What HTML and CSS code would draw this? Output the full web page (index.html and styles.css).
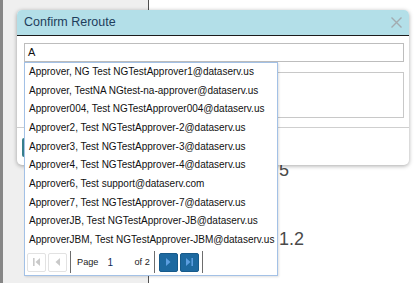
FILE: index.html
```html
<!DOCTYPE html>
<html>
<head>
<meta charset="utf-8">
<link rel="stylesheet" href="styles.css">
</head>
<body>
<div class="page">
  <aside class="sidebar"></aside>
  <main class="main">
    <p class="ver v1">5</p>
    <p class="ver v2">1.2</p>
  </main>
</div>

<div class="modal">
  <div class="modal-head">
    <span class="title">Confirm Reroute</span>
    <svg class="close" width="11" height="11" viewBox="0 0 11 11"><path d="M0.5 0.5L10.5 10.5M10.5 0.5L0.5 10.5" stroke="#a3abb0" stroke-width="1.4" fill="none"/></svg>
  </div>
  <div class="modal-body">
    <div class="field">A</div>
    <div class="area"></div>
  </div>
  <div class="modal-foot">
    <button class="btn" aria-label="Reroute"></button>
  </div>
</div>

<div class="dropdown">
  <ul class="list">
    <li>Approver, NG Test NGTestApprover1@dataserv.us</li>
    <li>Approver, TestNA NGtest-na-approver@dataserv.us</li>
    <li>Approver004, Test NGTestApprover004@dataserv.us</li>
    <li>Approver2, Test NGTestApprover-2@dataserv.us</li>
    <li>Approver3, Test NGTestApprover-3@dataserv.us</li>
    <li>Approver4, Test NGTestApprover-4@dataserv.us</li>
    <li>Approver6, Test support@dataserv.com</li>
    <li>Approver7, Test NGTestApprover-7@dataserv.us</li>
    <li>ApproverJB, Test NGTestApprover-JB@dataserv.us</li>
    <li>ApproverJBM, Test NGTestApprover-JBM@dataserv.us</li>
  </ul>
  <div class="pager">
    <span class="pbtn off"><svg width="10" height="10" viewBox="0 0 10 10"><rect x="1" y="1" width="1.6" height="8" fill="#c9c9c9"/><path d="M8 1L3.5 5L8 9Z" fill="#c9c9c9"/></svg></span>
    <span class="pbtn off"><svg width="10" height="10" viewBox="0 0 10 10"><path d="M7 1L2.5 5L7 9Z" fill="#c9c9c9"/></svg></span>
    <span class="sep"></span>
    <span class="plabel">Page</span>
    <span class="pnum">1</span>
    <span class="pof">of 2</span>
    <span class="sep"></span>
    <span class="pbtn on"><svg width="10" height="10" viewBox="0 0 10 10"><path d="M3 1L7.5 5L3 9Z" fill="#5b9ee0"/></svg></span>
    <span class="pbtn on"><svg width="10" height="10" viewBox="0 0 10 10"><path d="M2 1L6.5 5L2 9Z" fill="#5b9ee0"/><rect x="7.4" y="1" width="1.6" height="8" fill="#5b9ee0"/></svg></span>
    <span class="sep"></span>
  </div>
</div>
</body>
</html>
```

FILE: styles.css
```css
* { box-sizing: border-box; }
html, body {
  margin: 0;
  padding: 0;
  width: 415px;
  height: 283px;
  overflow: hidden;
  background: #ffffff;
  font-family: "Liberation Sans", Arial, sans-serif;
}
.page {
  display: flex;
  height: 283px;
}
.sidebar {
  width: 149px;
  flex: none;
  background: #efefef;
  border-left: 3px solid #868686;
  border-right: 1px solid #4f4f4f;
}
.main {
  flex: 1;
  padding-left: 130px;
  padding-top: 160px;
}
.ver {
  margin: 0;
  font-size: 18px;
  line-height: 20px;
  color: #4a4a4a;
}
.v2 { margin-top: 49px; }

.modal {
  position: absolute;
  left: 17px;
  top: 10px;
  width: 392px;
  background: #ffffff;
  border-radius: 5px;
  box-shadow: 0 1px 4px rgba(0,0,0,0.35);
  overflow: hidden;
}
.modal-head {
  height: 26px;
  background: #b3dfe8;
  border-bottom: 1px solid #1c1c1c;
  display: flex;
  align-items: center;
  justify-content: space-between;
  padding: 0 7px 1px 7px;
}
.title {
  font-size: 12.5px;
  color: #1e3d5c;
}
.close { display: block; margin-top: 1px; }
.modal-body {
  padding: 7px 5px 9px 7px;
  display: flex;
  flex-direction: column;
  gap: 10px;
}
.field {
  height: 19px;
  border: 1px solid #bdbdbd;
  font-size: 11px;
  line-height: 17px;
  padding-left: 3px;
  color: #111;
}
.area {
  height: 46px;
  border: 1px solid #c8c8c8;
}
.modal-foot {
  border-top: 1px solid #cfcfcf;
  padding: 10px 5px 8px 5px;
}
.btn {
  display: block;
  height: 19px;
  width: 70px;
  border: 0;
  border-radius: 2px;
  background: #377f8d;
  padding: 0;
}

.dropdown {
  position: absolute;
  left: 24px;
  top: 62px;
  width: 254px;
  height: 214px;
  background: #ffffff;
  border: 1px solid #a3c1e6;
  box-shadow: 1px 1px 2px rgba(0,0,0,0.12);
  display: flex;
  flex-direction: column;
}
.list {
  list-style: none;
  margin: 0;
  padding: 0;
}
.list li {
  height: 18.67px;
  line-height: 18.67px;
  padding-left: 4px;
  font-size: 10px;
  color: #111;
  white-space: nowrap;
}
.pager {
  flex: 1;
  display: flex;
  align-items: center;
  padding-left: 2px;
  font-size: 9.2px;
  color: #222;
}
.pbtn {
  width: 19px;
  height: 19px;
  border-radius: 2px;
  display: flex;
  align-items: center;
  justify-content: center;
  margin-right: 2px;
}
.pbtn.off { border: 1px solid #e2e2e2; background: #fff; }
.pbtn.on { background: #1d69a0; border: 1px solid #175a8a; }
.sep {
  width: 1px;
  height: 22px;
  background: #6d6d6d;
  margin: 0 4px 0 1px;
}
.plabel { margin-left: 2px; }
.pnum { margin-left: 9px; color: #102a55; width: 27px; font-size: 10px; }
.pof { margin-right: 3px; }
```
